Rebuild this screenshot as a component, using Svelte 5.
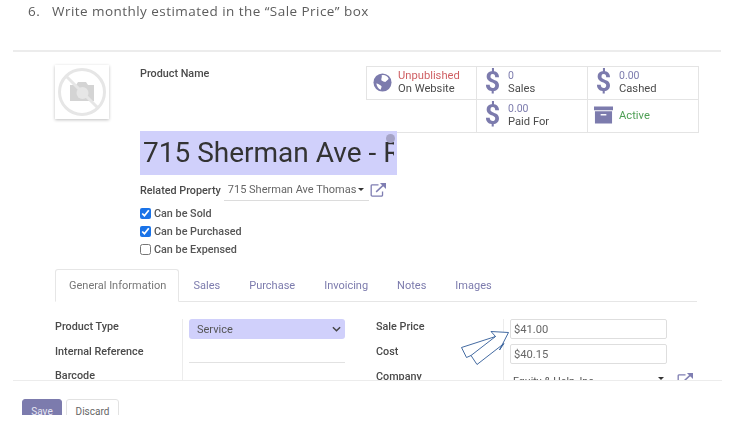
<script>
	const flags = [
		{ label: 'Can be Sold', checked: true },
		{ label: 'Can be Purchased', checked: true },
		{ label: 'Can be Expensed', checked: false }
	];
	const tabs = ['General Information', 'Sales', 'Purchase', 'Invoicing', 'Notes', 'Images'];
</script>

{#snippet external()}
	<svg class="ext" viewBox="0 0 18 16" width="17" height="15">
		<path d="M9 3H2.500A1.200 1.200 0 0 0 1.200 4.200v9.600A1.200 1.200 0 0 0 2.500 15h9.600a1.200 1.200 0 0 0 1.200-1.200V10" fill="none" stroke="#7f7eb2" stroke-width="1.400" />
		<path d="M6.500 10.500 15 2.500" fill="none" stroke="#7f7eb2" stroke-width="1.600" />
		<path d="M10.500 1h6.500v6.500z" fill="#7f7eb2" />
	</svg>
{/snippet}

<div class="page">
	<p class="step"><span>6.</span>Write monthly estimated in the “Sale Price” box</p>

	<div class="sheet">
		<div class="head">
			<div class="photo">
				<svg viewBox="0 0 50 50" width="50" height="50">
					<circle cx="25" cy="25" r="22.500" fill="none" stroke="#e6e6e6" stroke-width="3" />
					<path d="M13 18h6l2-3h8l2 3h6v16H13z" fill="#d4d4d4" />
					<circle cx="25.500" cy="26" r="6" fill="#e6e6e6" />
					<path d="M9 9 41 41" stroke="#e6e6e6" stroke-width="3" />
				</svg>
			</div>
			<strong class="name-label">Product Name</strong>
			<div class="stats">
				<div class="stat">
					<svg class="globe" viewBox="0 0 20 20" width="19" height="19">
						<circle cx="10" cy="10" r="9.500" fill="#7c7bad" />
						<path d="M9 2.500c3-1 6 .5 7.500 3.500-1 1.500-2.500 2-3.500 3.500-1.500 0-2.500-1-4-1.500C8 6 10 4.500 9 2.500zM3.500 11c2 0 4 1.500 5.500 3 0 1.500-.5 2.500-1 3.500-2.500-1-4-3.500-4.500-6.500z" fill="#fff" />
					</svg>
					<span class="stack"><span class="red">Unpublished</span><span>On Website</span></span>
				</div>
				<div class="stat">
					<span class="dollar">$</span>
					<span class="stack"><span class="num">0</span><span>Sales</span></span>
				</div>
				<div class="stat">
					<span class="dollar">$</span>
					<span class="stack"><span class="num">0.00</span><span>Cashed</span></span>
				</div>
				<div class="stat empty"></div>
				<div class="stat">
					<span class="dollar">$</span>
					<span class="stack"><span class="num">0.00</span><span>Paid For</span></span>
				</div>
				<div class="stat">
					<svg class="box" viewBox="0 0 20 18" width="19" height="18">
						<path d="M0 0h20v4H0zM1 5h18v13H1z" fill="#7c7bad" />
						<path d="M7 8h6v1.500H7z" fill="#fff" />
					</svg>
					<span class="green">Active</span>
				</div>
			</div>
		</div>

		<div class="title-wrap">
			<div class="title">715 Sherman Ave - Rent</div>
			<span class="title-dot"></span>
		</div>

		<div class="related">
			<strong>Related Property</strong>
			<span class="related-value"><span>715 Sherman Ave Thomas</span><i class="caret"></i></span>
			{@render external()}
		</div>

		<div class="flags">
			{#each flags as flag}
				<label><input type="checkbox" checked={flag.checked} />{flag.label}</label>
			{/each}
		</div>

		<div class="tabs">
			{#each tabs as tab, i}
				<span class="tab" class:active={i === 0}>{tab}</span>
			{/each}
		</div>

		<div class="fields">
			<div class="labels">
				<strong>Product Type</strong>
				<strong>Internal Reference</strong>
				<strong>Barcode</strong>
			</div>
			<div class="values left">
				<div class="select">Service
					<svg viewBox="0 0 10 6" width="9" height="6"><path d="M1 1l4 4 4-4" fill="none" stroke="#444" stroke-width="1.600" /></svg>
				</div>
				<div class="blank"></div>
			</div>
			<div class="labels right-labels">
				<strong>Sale Price</strong>
				<strong>Cost</strong>
				<strong>Company</strong>
			</div>
			<div class="values right">
				<div class="input">$41.00</div>
				<div class="input">$40.15</div>
				<div class="company">
					<span>Equity &amp; Help, Inc</span><i class="caret"></i>
					{@render external()}
				</div>
			</div>
		</div>
	</div>

	<div class="footer">
		<button class="save">Save</button>
		<button class="discard">Discard</button>
	</div>

	<svg class="arrow" viewBox="0 0 735 423" width="735" height="423">
		<path d="M508.500 332.500 491 331.500 495.500 336.500 461.500 347.500 466.500 357.500 471 355.500 477 364.500 504 343.500 499.500 350z" fill="#fff" stroke="#2f5a97" stroke-width="0.900" />
		<path d="M471 355.500 495.500 336.500" fill="none" stroke="#2f5a97" stroke-width="0.900" />
	</svg>
</div>

<style>
	:global(body) {
		background: #fff;
	}

	.page {
		position: relative;
		width: 735px;
		height: 423px;
		overflow: hidden;
		font-family: Roboto, sans-serif;
		font-size: 11px;
		color: #4c4c4c;
		filter: blur(0.4px);
	}

	.step {
		margin: 0 0 0 28px;
		height: 50px;
		padding-top: 3px;
		box-sizing: border-box;
		line-height: 16px;
		font-family: 'Open Sans', sans-serif;
		font-size: 13.500px;
		letter-spacing: 0.45px;
		color: #5c5c5c;
	}

	.step span {
		display: inline-block;
		width: 24px;
	}

	.sheet {
		height: 330px;
		margin: 0 14px 0 13px;
		padding-left: 42px;
		border-top: 2px solid #ececec;
		box-sizing: border-box;
		overflow: hidden;
	}

	.head {
		display: flex;
		align-items: flex-start;
		height: 79px;
		padding-top: 13px;
		box-sizing: border-box;
	}

	.photo {
		display: flex;
		align-items: center;
		justify-content: center;
		width: 54px;
		height: 54px;
		box-shadow: 0 1px 3px rgba(0, 0, 0, 0.25);
	}

	.name-label {
		margin: 2px 0 0 31px;
		line-height: 14px;
		width: 226px;
	}

	strong {
		font-weight: 500;
		color: #4a4a4a;
		font-size: 10.800px;
	}

	.stats {
		display: grid;
		grid-template-columns: 110px 111px 112px;
		grid-auto-rows: 33px;
		border-top: 1px solid #e4e4e4;
		border-right: 1px solid #e4e4e4;
		margin-top: 1px;
		width: 333px;
		box-sizing: border-box;
	}

	.stat {
		display: flex;
		align-items: center;
		padding: 0 0 2px 6px;
		gap: 6px;
		border-left: 1px solid #e4e4e4;
		border-bottom: 1px solid #e4e4e4;
		line-height: 13px;
		font-size: 11.200px;
		box-sizing: border-box;
	}

	.stat.empty {
		border-left: 0;
	}

	.stack {
		display: flex;
		flex-direction: column;
	}

	.red {
		color: #cf5f63;
	}

	.green {
		color: #4f9f55;
	}

	.num {
		color: #7c7bad;
		font-size: 10.500px;
	}

	.dollar {
		width: 19px;
		text-align: center;
		font-size: 27px;
		font-weight: 700;
		line-height: 30px;
		color: #7c7bad;
	}

	.title-wrap {
		position: relative;
		width: 257px;
		height: 44px;
		margin-left: 85px;
		background: #d0d0fb;
	}

	.title {
		width: 251px;
		padding-left: 3px;
		overflow: hidden;
		white-space: nowrap;
		font-size: 28px;
		line-height: 44px;
		color: #333;
	}

	.title-dot {
		position: absolute;
		top: 3px;
		right: 2px;
		width: 9px;
		height: 9px;
		border-radius: 50%;
		background: #a5a3c6;
	}

	.related {
		display: flex;
		align-items: center;
		margin: 4px 0 0 85px;
		height: 22px;
	}

	.related-value {
		display: flex;
		align-items: center;
		justify-content: space-between;
		width: 145px;
		height: 22px;
		margin-left: 3px;
		box-sizing: border-box;
		padding: 0 5px 0 4px;
		border-bottom: 1px solid #dcdcdc;
		font-size: 11px;
		color: #666;
		white-space: nowrap;
		overflow: hidden;
	}

	.related-value span {
		width: 128px;
		overflow: hidden;
	}

	.caret {
		flex: none;
		width: 0;
		height: 0;
		border: 3.500px solid transparent;
		border-top-color: #333;
		border-bottom: 0;
	}

	.ext {
		margin: -2px 0 0 1px;
		flex: none;
	}

	.flags {
		display: flex;
		flex-direction: column;
		gap: 4px;
		margin: 5px 0 0 85px;
	}

	label {
		display: flex;
		align-items: center;
		gap: 3px;
		height: 14px;
		font-weight: 500;
		font-size: 10.800px;
		color: #555;
	}

	input {
		width: 11px;
		height: 11px;
		margin: 1px 0 0 0;
		accent-color: #1a73e8;
	}

	.tabs {
		display: flex;
		height: 33px;
		margin-top: 13px;
		margin-right: 24px;
		border-bottom: 1px solid #e6e6e6;
		box-sizing: border-box;
	}

	.tab {
		padding: 0 13.500px;
		margin-bottom: -1px;
		line-height: 32px;
		color: #7c7bad;
		font-size: 11px;
		border: 1px solid transparent;
	}

	.tab.active {
		width: 124px;
		box-sizing: border-box;
		padding: 0 0 0 13px;
		background: #fff;
		border-color: #e6e6e6;
		border-bottom-color: #fff;
		border-radius: 3px 3px 0 0;
		color: #777;
	}

	.fields {
		display: grid;
		grid-template-columns: 127px 194px 127px 1fr;
		padding-top: 17px;
	}

	.labels {
		display: flex;
		flex-direction: column;
		gap: 10.500px;
		padding-top: 1px;
	}

	.labels strong {
		line-height: 14px;
	}

	.values {
		height: 70px;
		padding-left: 6px;
		border-left: 1px solid #ececec;
		box-sizing: border-box;
	}

	.left {
		width: 164px;
	}

	.select {
		display: flex;
		align-items: center;
		justify-content: space-between;
		width: 156px;
		height: 20px;
		padding: 0 4px 0 8px;
		box-sizing: border-box;
		background: #d0d0fb;
		border-radius: 3px;
		color: #555;
	}

	.blank {
		width: 156px;
		height: 23px;
		border-bottom: 1px solid #e2e2e2;
	}

	.input {
		width: 157px;
		height: 20px;
		margin-bottom: 5px;
		padding-left: 3px;
		box-sizing: border-box;
		border: 1px solid #dedede;
		border-radius: 2px;
		line-height: 19px;
		color: #666;
		font-size: 11.200px;
	}

	.right-labels strong:last-child {
		padding-top: 1px;
	}

	.company {
		display: flex;
		align-items: center;
		width: 190px;
		height: 24px;
		padding-left: 3px;
		color: #555;
		font-size: 10.500px;
		box-sizing: border-box;
	}

	.company span {
		width: 145px;
	}

	.company .caret {
		margin-top: -5px;
	}

	.company .ext {
		margin-left: 13px;
		margin-top: -4px;
	}

	.footer {
		display: flex;
		gap: 4px;
		height: 35px;
		margin: 0 13px;
		padding: 18px 0 0 9px;
		border-top: 1px solid #ececec;
		box-sizing: border-box;
		overflow: hidden;
		align-items: flex-start;
	}

	button {
		flex: none;
		font-family: inherit;
		font-size: 10px;
		padding: 5px 0 14px;
		border-radius: 3px;
		line-height: 13px;
	}

	.save {
		width: 40px;
		background: #7c7bad;
		border: 1px solid #7c7bad;
		color: #e8e8f4;
	}

	.discard {
		width: 53px;
		background: #fff;
		border: 1px solid #e2e2e2;
		color: #666;
	}

	.arrow {
		position: absolute;
		top: 0;
		left: 0;
	}
</style>
